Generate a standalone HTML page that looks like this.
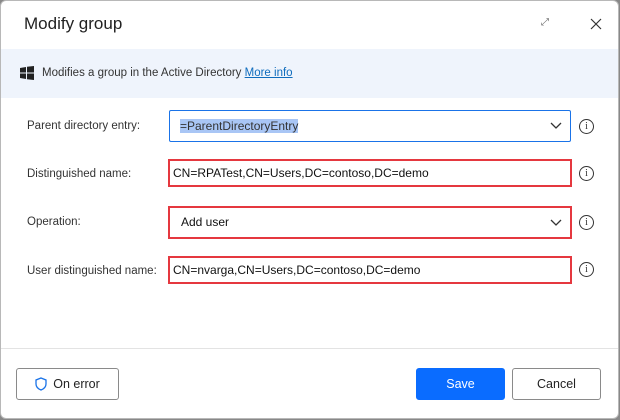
<!DOCTYPE html>
<html><head><style>
body{margin:0;width:620px;height:420px;background:#888;font-family:"Liberation Sans",sans-serif;overflow:hidden;position:relative}
.dlg{position:absolute;left:0;top:0;width:617px;height:417px;background:#fff;border:1px solid #b8b8b8;border-radius:6px;overflow:hidden}
.abs{position:absolute}
.title{left:23px;top:13px;font-size:17px;color:#222}
.banner{left:0;top:48px;width:617px;height:49px;background:#eff4fc}
.lbl{font-size:11.5px;color:#333;left:26px}
.box{border:2px solid #e5383f;background:#fff;font-size:12px;color:#111;box-sizing:border-box;padding-left:3px;line-height:24px}
.info{width:13px;height:13px;border:1px solid #333;border-radius:50%;font-size:10px;text-align:center;line-height:13px;color:#333;font-family:"Liberation Serif",serif}
.btn{border:1px solid #8a8a8a;border-radius:3px;font-size:12.5px;text-align:center;line-height:30px;box-sizing:border-box;height:32px;color:#222}
</style></head><body>
<div class="dlg">
<div class="abs title">Modify group</div>
<div class="abs" style="left:540px;top:16px;font-size:10px;color:#666">⤢</div>
<svg class="abs" style="left:589px;top:17px" width="12" height="12"><path d="M1 1L11 11M11 1L1 11" stroke="#333" stroke-width="1.2"/></svg>
<div class="abs banner"></div>
<svg class="abs" style="left:19px;top:65px" width="14" height="14"><path d="M0 2L6 1V6.5H0ZM7 0.8L14 0V6.5H7ZM0 7.5H6V13L0 12ZM7 7.5H14V14L7 13.2Z" fill="#222"/></svg>
<div class="abs" style="left:41px;top:66px;font-size:11.5px;color:#333">Modifies a group in the Active Directory <span style="color:#0f6cbd;text-decoration:underline">More info</span></div>
<div class="abs lbl" style="top:119px">Parent directory entry:</div>
<div class="abs" style="left:168px;top:109px;width:402px;height:32px;border:1px solid #1a73e8;border-radius:2px;box-sizing:border-box"><span style="position:absolute;left:10px;top:8px;font-size:12px;background:#a9c6f5;color:#333">=ParentDirectoryEntry</span></div>
<svg class="abs" style="left:549px;top:121px" width="12" height="8"><path d="M1 1L6 6L11 1" stroke="#333" fill="none" stroke-width="1.3"/></svg>
<div class="abs info" style="left:578px;top:118px">i</div>
<div class="abs lbl" style="top:167px">Distinguished name:</div>
<div class="abs box" style="left:167px;top:158px;width:404px;height:28px">CN=RPATest,CN=Users,DC=contoso,DC=demo</div>
<div class="abs info" style="left:578px;top:165px">i</div>
<div class="abs lbl" style="top:215px">Operation:</div>
<div class="abs box" style="left:167px;top:205px;width:404px;height:33px;line-height:29px;padding-left:11px">Add user</div>
<svg class="abs" style="left:549px;top:218px" width="12" height="8"><path d="M1 1L6 6L11 1" stroke="#333" fill="none" stroke-width="1.3"/></svg>
<div class="abs info" style="left:578px;top:214px">i</div>
<div class="abs lbl" style="top:264px">User distinguished name:</div>
<div class="abs box" style="left:167px;top:255px;width:404px;height:28px">CN=nvarga,CN=Users,DC=contoso,DC=demo</div>
<div class="abs info" style="left:578px;top:261px">i</div>
<div class="abs" style="left:0;top:347px;width:617px;height:1px;background:#e3e3e3"></div>
<div class="abs btn" style="left:15px;top:367px;width:103px"><svg style="vertical-align:-3px;margin-right:6px" width="12" height="14"><path d="M6 1L11 3V7C11 10 8.5 12 6 13C3.5 12 1 10 1 7V3Z" stroke="#1a73e8" fill="none" stroke-width="1.3"/></svg>On error</div>
<div class="abs btn" style="left:415px;top:367px;width:89px;background:#0a6cff;border-color:#0a6cff;color:#fff">Save</div>
<div class="abs btn" style="left:511px;top:367px;width:89px">Cancel</div>
</div>
</body></html>
